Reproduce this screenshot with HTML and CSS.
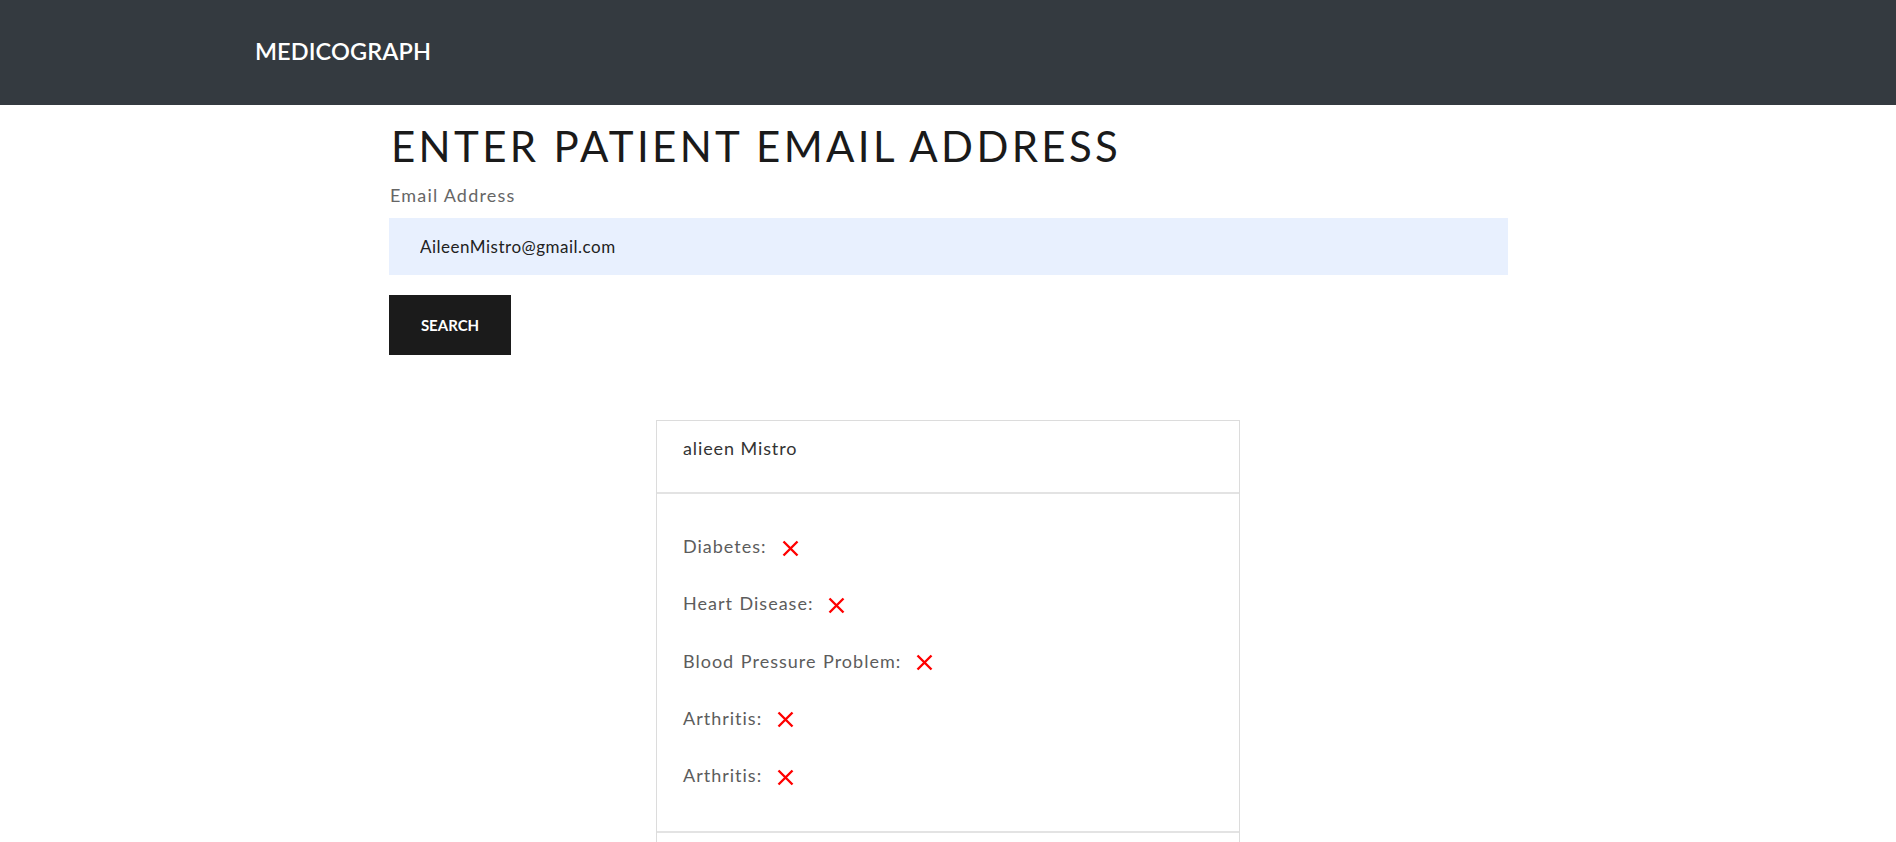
FILE: index.html
```html
<!DOCTYPE html>
<html lang="en">
<head>
<meta charset="utf-8">
<title>Medicograph</title>
<link rel="stylesheet" href="styles.css">
</head>
<body>
<nav class="navbar">
  <a class="brand" href="#">MEDICOGRAPH</a>
</nav>
<main class="container">
  <h1 class="title">ENTER PATIENT EMAIL ADDRESS</h1>
  <form class="search-form">
    <label class="label" for="email">Email Address</label>
    <input class="input" id="email" type="email" value="AileenMistro@gmail.com">
    <button class="btn" type="button">SEARCH</button>
  </form>
  <section class="card">
    <div class="card-header">alieen Mistro</div>
    <div class="card-body">
      <div class="row">Diabetes:<svg class="x" viewBox="0 0 17 17"><path d="M1.5 1.5 L15.5 15.5 M15.5 1.5 L1.5 15.5"/></svg></div>
      <div class="row">Heart Disease:<svg class="x" viewBox="0 0 17 17"><path d="M1.5 1.5 L15.5 15.5 M15.5 1.5 L1.5 15.5"/></svg></div>
      <div class="row">Blood Pressure Problem:<svg class="x" viewBox="0 0 17 17"><path d="M1.5 1.5 L15.5 15.5 M15.5 1.5 L1.5 15.5"/></svg></div>
      <div class="row">Arthritis:<svg class="x" viewBox="0 0 17 17"><path d="M1.5 1.5 L15.5 15.5 M15.5 1.5 L1.5 15.5"/></svg></div>
      <div class="row">Arthritis:<svg class="x" viewBox="0 0 17 17"><path d="M1.5 1.5 L15.5 15.5 M15.5 1.5 L1.5 15.5"/></svg></div>
    </div>
    <div class="card-footer"></div>
  </section>
</main>
</body>
</html>
```
FILE: styles.css
```css
* { box-sizing: border-box; }
html, body { margin: 0; padding: 0; }
body {
  font-family: "Lato", "Open Sans", sans-serif;
  background: #fff;
  color: #333;
}
.navbar {
  height: 105px;
  background: #343a40;
  display: flex;
  align-items: center;
  padding-left: 255px;
}
.brand {
  color: #fff;
  text-decoration: none;
  font-size: 23.5px;
  font-weight: 600;
  letter-spacing: 0.1px;
  line-height: 1;
  margin-top: -2px;
}
.container {
  width: 1119px;
  margin: 0 auto 0 389px;
}
.title {
  margin: 16px 0 0 2px;
  font-size: 42px;
  line-height: 50px;
  font-weight: 400;
  letter-spacing: 3.35px;
  color: #1a1a1a;
}
.search-form {
  display: flex;
  flex-direction: column;
  align-items: flex-start;
}
.label {
  margin: 11px 0 0 1px;
  font-size: 18px;
  line-height: 26px;
  color: #666;
  letter-spacing: 1.2px;
}
.input {
  margin-top: 10px;
  width: 1119px;
  height: 57px;
  border: none;
  background: #e8f0fe;
  padding: 0 31px;
  font-family: inherit;
  font-size: 17px;
  letter-spacing: 0.5px;
  color: #222;
  outline: none;
}
.btn {
  margin-top: 20px;
  width: 122px;
  height: 60px;
  border: none;
  background: #1b1b1b;
  color: #fff;
  font-family: inherit;
  font-size: 15px;
  font-weight: 700;
  padding: 0;
}
.card {
  width: 584px;
  margin: 65px 0 0 267px;
  border: 1px solid #dcdcdc;
}
.card-header {
  padding: 14px 26px 31px;
  font-size: 18px;
  line-height: 26px;
  color: #333;
  letter-spacing: 0.9px;
  border-bottom: 2px solid #e3e3e3;
}
.card-body {
  padding: 39px 26px 43px;
  display: flex;
  flex-direction: column;
  gap: 31.3px;
}
.row {
  font-size: 18px;
  line-height: 26px;
  height: 26px;
  color: #5c5c5c;
  letter-spacing: 1px;
  word-spacing: 1px;
}
.x {
  width: 17px;
  height: 17px;
  margin-left: 15px;
  vertical-align: -3.5px;
  fill: none;
  stroke: #ff0000;
  stroke-width: 2.4;
}
.card-footer {
  border-top: 2px solid #e3e3e3;
  height: 40px;
}
```
